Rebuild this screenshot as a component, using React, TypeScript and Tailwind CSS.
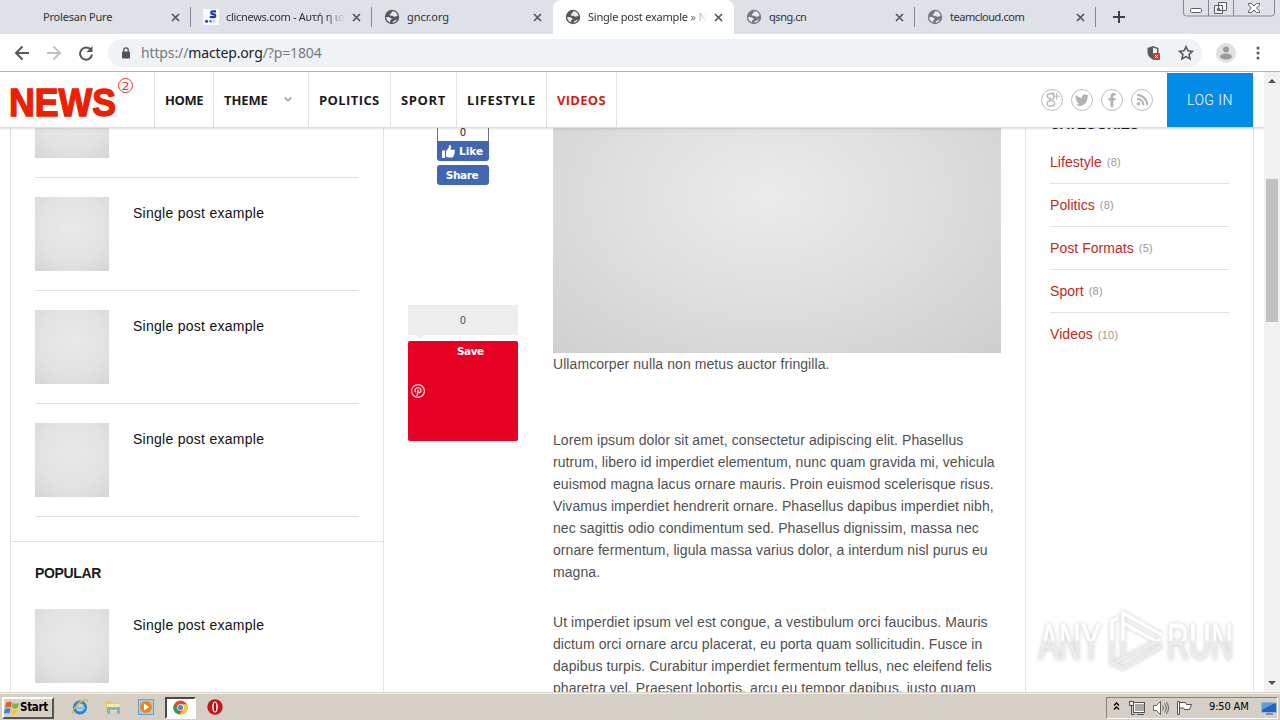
import { ReactNode } from "react";
import clsx from "clsx";

type Tab = {
  title: string;
  icon: "none" | "clic" | "globe";
  active?: boolean;
  separator?: boolean;
  fade?: boolean;
  dim?: boolean;
  spacing: string;
};

const tabs: Tab[] = [
  { title: "Prolesan Pure", icon: "none", separator: true, spacing: "tracking-[-0.2px]" },
  { title: "clicnews.com - Αυτή η ιστ", icon: "clic", separator: true, fade: true, spacing: "tracking-[-0.3px]" },
  { title: "gncr.org", icon: "globe", spacing: "tracking-[-0.05px]" },
  { title: "Single post example » Ne", icon: "globe", active: true, fade: true, spacing: "tracking-[-0.22px]" },
  { title: "qsng.cn", icon: "globe", separator: true, dim: true, spacing: "tracking-[-0.45px]" },
  { title: "teamcloud.com", icon: "globe", separator: true, dim: true, spacing: "tracking-[-0.45px]" },
];

const categories = [
  { name: "Lifestyle", count: 8 },
  { name: "Politics", count: 8 },
  { name: "Post Formats", count: 5 },
  { name: "Sport", count: 8 },
  { name: "Videos", count: 10 },
];

const navItems = [
  { label: "HOME", width: "w-[59px] tracking-[-0.4px]" },
  { label: "THEME", width: "w-[95px] tracking-[-0.1px]", menu: true },
  { label: "POLITICS", width: "w-[82px] tracking-[0.4px]" },
  { label: "SPORT", width: "w-[66px] tracking-[0.6px]" },
  { label: "LIFESTYLE", width: "w-[90px] tracking-[0.6px]" },
  { label: "VIDEOS", width: "w-[71px] border-r tracking-[0.3px]", current: true },
];

const firstParagraph = [
  "Lorem ipsum dolor sit amet, consectetur adipiscing elit. Phasellus",
  "rutrum, libero id imperdiet elementum, nunc quam gravida mi, vehicula",
  "euismod magna lacus ornare mauris. Proin euismod scelerisque risus.",
  "Vivamus imperdiet hendrerit ornare. Phasellus dapibus imperdiet nibh,",
  "nec sagittis odio condimentum sed. Phasellus dignissim, massa nec",
  "ornare fermentum, ligula massa varius dolor, a interdum nisl purus eu",
  "magna.",
];

const secondParagraph = [
  "Ut imperdiet ipsum vel est congue, a vestibulum orci faucibus. Mauris",
  "dictum orci ornare arcu placerat, eu porta quam sollicitudin. Fusce in",
  "dapibus turpis. Curabitur imperdiet fermentum tellus, nec eleifend felis",
  "pharetra vel. Praesent lobortis, arcu eu tempor dapibus, justo quam",
];

function Globe({ dim }: { dim?: boolean }) {
  return (
    <svg className="h-4 w-4" viewBox="0 0 16 16">
      <circle cx="8" cy="8" r="7.2" fill={dim ? "#75787c" : "#54575b"} />
      <path
        d="M8.500 2.300c-1.300.600-.4 1.500-1.500 2.100-1.300.5-1.600 1.600-.7 2.100 1 .5 2-.1 2.600.6.600.8 1.800.8 2.500.4l2.200-.6C13.200 4.300 11.200 2.300 8.500 2.300ZM2.200 8c1.300-.1 2.500 0 3.600.5 1 .5 2 .8 1.800 1.800-.3.800-1.500.8-1.600 1.600-.1.500.400 1 .2 1.500C3.700 12.600 2.100 10.400 2.200 8ZM8.500 13.700c.3-.8.3-1.200 1.200-1.600.9-.3 1.200-1 2-1.300.4-.2.800-.1 1.200 0-.8 1.600-2.300 2.800-4.400 2.900Z"
        fill="#e8eaed"
      />
    </svg>
  );
}

function ClicIcon() {
  return (
    <svg className="h-4 w-4" viewBox="0 0 16 16">
      <rect width="16" height="16" fill="#f7fafc" />
      <path d="M13 2.400H9.500c-1.700 0-1.700 2.500 0 2.700l1.500.2c1.800.3 1.700 2.900 0 2.900H6.800" fill="none" stroke="#1f3fa6" strokeWidth="2.200" />
      <circle cx="3.500" cy="12.300" r="1.500" fill="#1f3fa6" />
      <circle cx="7.500" cy="12.300" r="1.200" fill="#4d62b5" />
      <circle cx="11" cy="12.300" r="1" fill="#a9bbe2" />
    </svg>
  );
}

function CloseMark() {
  return (
    <svg className="h-[9px] w-[9px] shrink-0" viewBox="0 0 9 9">
      <path d="M1 1l7 7M8 1 1 8" stroke="#54575c" strokeWidth="1.700" />
    </svg>
  );
}

function TabStrip() {
  return (
    <div className="flex h-[34px] bg-[#dee1e7] pl-[10px]">
      {tabs.map((tab) => (
        <div
          key={tab.title}
          className={clsx(
            "flex w-[181px] items-center pl-3",
            tab.active && "rounded-t-lg bg-white"
          )}
        >
          <div className="h-4 w-4 shrink-0">
            {tab.icon === "clic" && <ClicIcon />}
            {tab.icon === "globe" && <Globe dim={tab.dim} />}
          </div>
          <div
            className={clsx(
              "w-[119px] overflow-hidden whitespace-nowrap font-['Noto_Sans',sans-serif] text-[11px] text-[#303236]",
              tab.icon === "none" ? "ml-[5px] mr-[2px]" : "ml-[7px]",
              tab.fade && "[mask-image:linear-gradient(to_right,black_84%,transparent)]",
              tab.spacing
            )}
          >
            {tab.title}
          </div>
          <div className="ml-[7px] flex flex-1 items-center justify-between">
            <CloseMark />
            {tab.separator && <span className="h-[20px] w-px bg-[#85888e]" />}
          </div>
        </div>
      ))}
      <svg className="ml-[17px] mt-[11px] h-3 w-3" viewBox="0 0 12 12">
        <path d="M6 0v12M0 6h12" stroke="#3c3f43" strokeWidth="2" />
      </svg>
      <svg className="ml-[57px] h-[18px] w-[94px]" viewBox="0 0 94 18" fill="none" stroke="#85888d">
        <path d="M1.500 0v13q0 3 3 3h85q3 0 3-3V0M26.500 0v16M51.500 0v16" />
        <rect x="8.500" y="8.500" width="11" height="4" rx="1" stroke="#5d6065" fill="#fff" />
        <path d="M36.500 2.500h8v8h-8zM32.500 5.500h8v8h-8zM35.500 8.500h2v2h-2z" stroke="#5d6065" fill="#f4f5f7" />
        <path d="M66.500 3.500h3l2.500 2.500 2.500-2.500h3v1.500l-3 3 3 3v1.500h-3l-2.500-2.500-2.500 2.500h-3v-1.500l3-3-3-3z" stroke="#5d6065" fill="#fff" />
      </svg>
    </div>
  );
}

function Toolbar() {
  return (
    <div className="flex h-[38px] items-center border-b border-[#b1b3ae] bg-white">
      <svg className="ml-[14px] h-4 w-[84px]" viewBox="0 0 84 16" fill="none" strokeWidth="2">
        <path d="M15 8H2M8.500 1.500 2 8l6.500 6.500" stroke="#54575b" />
        <path d="M33 8h13M39.500 1.500 46 8l-6.500 6.500" stroke="#bfc1c4" />
        <path d="M77 5.200A6 6 0 1 0 78 9.500" stroke="#54575b" />
        <path d="M78.500 1v6h-6z" fill="#54575b" />
      </svg>
      <div className="ml-[10px] flex h-7 w-[1094px] items-center rounded-full bg-[#f0f3f6] pl-[13px] pr-[8px]">
        <svg className="h-3 w-[10px]" viewBox="0 0 10 12">
          <rect x="1" y="4.500" width="8" height="7" rx="1" fill="#4f5256" />
          <path d="M2.800 5V3a2.200 2.200 0 0 1 4.400 0v2" fill="none" stroke="#4f5256" strokeWidth="1.300" />
        </svg>
        <span className="ml-[10px] whitespace-nowrap font-['Noto_Sans',sans-serif] text-[14px] leading-5 tracking-[-0.13px] text-[#75797e]">
          https://<span className="text-[#202124]">mactep.org</span>/?p=1804
        </span>
        <svg className="ml-auto h-4 w-4" viewBox="0 0 16 16">
          <path d="M7 1 1.500 3v4c0 3.500 2.300 6 5.500 7.500C10.200 13 12.500 10.500 12.500 7V3z" fill="#555a60" />
          <path d="M7 2.500V13c2.500-1.200 4-3.200 4-6V4z" fill="#eef0f2" />
          <rect x="7" y="8" width="7" height="7" rx="1" fill="#d8372c" />
          <path d="m9 10 3 3m0-3-3 3" stroke="#fff" />
        </svg>
        <svg className="ml-4 h-4 w-4" viewBox="0 0 24 24" fill="none" stroke="#54575b" strokeWidth="2.300">
          <path d="m12 2.500 2.900 6.300 6.900.7-5.200 4.600 1.500 6.900L12 17.400 5.900 21l1.500-6.900L2.200 9.500l6.900-.7z" />
        </svg>
      </div>
      <svg className="ml-[14px] h-5 w-5" viewBox="0 0 20 20">
        <circle cx="10" cy="10" r="10" fill="#e0e0e0" />
        <circle cx="10" cy="6.500" r="3" fill="#9a9a9a" />
        <ellipse cx="10" cy="13.500" rx="6" ry="3" fill="#9a9a9a" />
      </svg>
      <svg className="ml-[20px] h-[14px] w-1" viewBox="0 0 4 14" fill="#54575b">
        <circle cx="2" cy="2" r="1.500" />
        <circle cx="2" cy="7" r="1.500" />
        <circle cx="2" cy="12" r="1.500" />
      </svg>
    </div>
  );
}

function SocialIcon({ children }: { children: ReactNode }) {
  return (
    <svg className="h-[22px] w-[22px]" viewBox="0 0 22 22">
      <circle cx="11" cy="11" r="10.500" fill="#fff" stroke="#bdbdbd" />
      {children}
    </svg>
  );
}

function SiteHeader() {
  return (
    <header className="z-10 flex h-[56px] shrink-0 border-b border-[#dcdcdc] bg-white shadow-[0_1px_2px_rgba(0,0,0,0.12)]">
      <svg className="h-[55px] w-[154px]" viewBox="0 0 154 55">
        <text
          x="9"
          y="43.500"
          textLength="107"
          lengthAdjust="spacingAndGlyphs"
          strokeWidth="1.400"
          className="fill-[#ea2000] stroke-[#ea2000] font-['Liberation_Sans',sans-serif] text-[39px] font-bold"
        >
          NEWS
        </text>
        <circle cx="125.500" cy="13.500" r="7" fill="none" stroke="#dc3b2c" />
        <text
          x="121.500"
          y="17.500"
          textLength="8"
          lengthAdjust="spacingAndGlyphs"
          className="fill-[#dc3b2c] font-['DejaVu_Sans',sans-serif] text-[10px]"
        >
          2
        </text>
      </svg>
      <nav className="flex">
        {navItems.map((item) => (
          <div
            key={item.label}
            className={clsx(
              "flex items-center border-l border-[#e2e2e2] pl-[10px] pt-[2px] font-['Open_Sans',sans-serif] text-[13px] leading-none font-bold whitespace-nowrap",
              item.width,
              item.current ? "text-[#cf1f14]" : "text-[#1b1b1b]"
            )}
          >
            {item.label}
            {item.menu && (
              <svg className="ml-auto mb-1 mr-[15px] h-2 w-[10px]" viewBox="0 0 10 8">
                <path d="m1.500 2.500 3.500 3 3.500-3" fill="none" stroke="#b0b0b0" strokeWidth="1.800" />
              </svg>
            )}
          </div>
        ))}
      </nav>
      <div className="ml-auto mr-[14px] flex items-center gap-2">
        <SocialIcon>
          <path
            d="M13.500 4.500H10C5 4.500 5.300 9.700 9.300 9.500c-.5 1 .2 1.500.9 1.900C4.800 11.800 5 17.300 9.500 17.300c4.800 0 5.200-3.500 2.700-5.200-1.400-1-.6-1.600.2-2.400 1.400-1.500.8-3.700-1-5"
            fill="none"
            stroke="#b9b9b9"
            strokeWidth="1.500"
          />
          <path d="M15.500 4v6.500M12.500 7.200h6.500" stroke="#b9b9b9" />
        </SocialIcon>
        <SocialIcon>
          <path
            d="M18 6.500c-.6.300-1 .4-1.600.5.600-.4 1-.9 1.200-1.500-.6.300-1.200.6-1.800.7A2.900 2.900 0 0 0 10.900 9 8 8 0 0 1 5 6c-.8 1.300-.4 3 .9 3.900-.5 0-.9-.1-1.300-.4 0 1.400 1 2.600 2.300 2.900-.4.100-.9.100-1.300 0 .4 1.200 1.400 2 2.700 2A6 6 0 0 1 4 15.600c5.600 3.400 12.600-.2 12.500-7.600.6-.4 1.100-.9 1.500-1.500Z"
            fill="#b3b3b3"
          />
        </SocialIcon>
        <SocialIcon>
          <path d="M9.500 18v-6.500H7.300V9h2.200V7.200C9.500 5 10.800 4 12.600 4h2v2.400h-1.300c-.9 0-1.100.4-1.100 1.100V9h2.400l-.3 2.500h-2.100V18z" fill="#b3b3b3" />
        </SocialIcon>
        <SocialIcon>
          <circle cx="7.500" cy="14.800" r="1.700" fill="#b3b3b3" />
          <path d="M6 9.700a6.500 6.500 0 0 1 6.500 6.600M6 5.900a10.300 10.300 0 0 1 10.300 10.400" fill="none" stroke="#b3b3b3" strokeWidth="2" />
        </SocialIcon>
      </div>
      <div className="mr-[11px] mt-px flex w-[86px] items-center justify-center bg-[#038be8] font-['Roboto',sans-serif] text-[14px] font-light tracking-[0.5px] text-white">
        LOG IN
      </div>
    </header>
  );
}

function Thumb() {
  return (
    <div className="h-[74px] w-[74px] shrink-0 bg-[radial-gradient(circle_at_50%_42%,#e9e9e9,#e2e2e2_60%,#d5d5d5)]" />
  );
}

function PostItem({ title = "Single post example" }: { title?: string }) {
  return (
    <div className="flex h-[113px] gap-6 border-b border-[#dfdfdf] pt-[19px]">
      <Thumb />
      <span className="mt-[6px] text-[14px] leading-5 tracking-[0.27px] text-[#111]">{title}</span>
    </div>
  );
}

function LeftColumn() {
  return (
    <aside className="ml-[10px] w-[374px] shrink-0 border-x border-[#e2e2e2]">
      <section className="-mt-[63px] h-[477px] border-b border-[#e2e2e2] pl-6 pr-[24px]">
        <PostItem />
        <PostItem />
        <PostItem />
        <PostItem />
      </section>
      <section className="pl-6 pr-[24px]">
        <h3 className="pt-[21px] text-[14px] font-bold leading-5 tracking-[-0.35px] text-[#1b1b1b]">POPULAR</h3>
        <div className="mt-[7px]">
          <PostItem />
        </div>
      </section>
    </aside>
  );
}

function ShareColumn() {
  return (
    <div className="ml-6 flex w-[110px] shrink-0 flex-col items-center font-['DejaVu_Sans',sans-serif]">
      <div className="flex h-[14px] w-[52px] items-center justify-center border-x border-[#6e7175] text-[10px] leading-none text-[#1d2129]">
        <span className="-mt-[5px]">0</span>
      </div>
      <div className="-mt-px flex h-5 w-[52px] items-center rounded-b-[3px] bg-[#4167b2] pl-[5px] text-[10.500px] font-bold text-white">
        <svg className="mr-1 h-[13px] w-[13px] shrink-0" viewBox="0 0 13 13" fill="#fff">
          <path d="M0 5.500h3V13H0zM4 6l2.700-3.300L7 .4c1.700-.6 2.500.8 2 2.400l-.6 1.900h3.300c1.500 0 1.500 1.600.8 2.100.5.800.2 1.700-.4 2 .3.800 0 1.500-.6 1.800.2 1-.4 1.800-1.300 1.800H6.500L4 11.800z" />
        </svg>
        <span className="pt-px">Like</span>
      </div>
      <div className="mt-1 flex h-5 w-[52px] items-center justify-center rounded-[3px] bg-[#4167b2] pr-[2px] pt-[2px] text-[10.500px] font-bold tracking-[-0.4px] text-white">
        Share
      </div>
      <div className="mt-[120px] flex h-[30px] w-[110px] items-center justify-center bg-[#eeeeee] text-[10px] text-[#555]">
        0
      </div>
      <span className="-ml-[86px] border-x-[5px] border-t-[4px] border-x-transparent border-t-[#eeeeee]" />
      <div className="mt-[2px] flex h-[100px] w-[110px] flex-col rounded-[2px] bg-[#e60023] pt-[3px] text-[10.500px] font-bold leading-[14px] tracking-[-0.5px] text-white">
        <span className="pl-[49px]">Save</span>
        <svg className="ml-[3px] mt-[26px] h-[14px] w-[14px]" viewBox="0 0 14 14" fill="none" stroke="#ffd5dc">
          <circle cx="7" cy="7" r="6.400" strokeWidth="1.200" />
          <path d="M4.800 8.200C2.900 5.800 4.800 3.600 7 3.600c2.500 0 3.500 2 2.700 3.800-.7 1.700-2.500 1.500-2.900.6M7.300 5.500 6 12" strokeWidth="1.400" />
        </svg>
      </div>
    </div>
  );
}

function Lines({ lines }: { lines: string[] }) {
  return (
    <p className="mb-[28px]">
      {lines.map((line) => (
        <span key={line} className="block">
          {line}
        </span>
      ))}
    </p>
  );
}

function Article() {
  return (
    <article className="ml-[35px] w-[448px] shrink-0 whitespace-nowrap text-[14px] leading-[22px] tracking-[0.075px] text-[#505050]">
      <div className="h-[225px] bg-[radial-gradient(ellipse_at_48%_30%,#ebebeb,#dfdfdf_45%,#cecece)]" />
      <p className="mb-[54px]">Ullamcorper nulla non metus auctor fringilla.</p>
      <Lines lines={firstParagraph} />
      <Lines lines={secondParagraph} />
    </article>
  );
}

function Categories() {
  return (
    <aside className="ml-6 w-[229px] shrink-0 border-x border-[#e2e2e2] px-6">
      <h3 className="-mt-[14px] text-[14px] font-bold leading-5 tracking-[-0.3px] text-[#1b1b1b]">CATEGORIES</h3>
      <ul className="mt-[7px]">
        {categories.map((c) => (
          <li key={c.name} className="flex h-[43px] items-center gap-[5px] border-b border-[#e2e2e2] last:border-0">
            <span className="text-[14px] tracking-[0.05px] text-[#c02a1e]">{c.name}</span>
            <span className="pt-px text-[11px] tracking-[0.2px] text-[#999]">({c.count})</span>
          </li>
        ))}
      </ul>
    </aside>
  );
}

function Scrollbar() {
  return (
    <div className="flex w-4 flex-col items-center bg-[#f1f1f1]">
      <span className="mt-[7px] border-x-4 border-b-4 border-x-transparent border-b-[#505050]" />
      <span className="mt-[96px] h-[143px] w-3 bg-[#c1c1c1]" />
      <span className="mb-[7px] mt-auto border-x-4 border-t-4 border-x-transparent border-t-[#505050]" />
    </div>
  );
}

function Watermark() {
  return (
    <svg
      className="absolute left-[1030px] top-[602px] z-20 h-[76px] w-[214px] drop-shadow-[0_0_2px_rgba(0,0,0,0.22)]"
      viewBox="0 0 214 76"
    >
      <defs>
        <linearGradient id="fade" gradientUnits="userSpaceOnUse" x1="0" y1="0" x2="0" y2="76">
          <stop offset="0.500" stopColor="#ffffff" />
          <stop offset="0.520" stopColor="#ebebeb" />
        </linearGradient>
      </defs>
      <g className="font-['Liberation_Sans',sans-serif] text-[50px]" fill="url(#fade)" stroke="url(#fade)" strokeWidth="0.800">
        <text x="9" y="57" textLength="62" lengthAdjust="spacingAndGlyphs">
          ANY
        </text>
        <text x="137" y="57" textLength="66" lengthAdjust="spacingAndGlyphs">
          RUN
        </text>
      </g>
      <g fill="none" stroke="url(#fade)" strokeWidth="3.500">
        <path d="M93 55V11l39 22M88 16l-6 3v43l48-24M93 21l36 20M132 44 93 66l-10-5" />
      </g>
    </svg>
  );
}

function Taskbar() {
  return (
    <div className="flex h-[28px] items-center border-t border-[#d6cfc6] bg-[#d6cfc6] font-['DejaVu_Sans_Condensed','DejaVu_Sans',sans-serif] shadow-[inset_0_1px_0_#f6f3ef]">
      <div className="ml-[2px] mt-[2px] flex h-[22px] w-[52px] items-center border-2 border-b-[#57534e] border-l-white border-r-[#57534e] border-t-white text-[11.500px] font-bold tracking-[-0.3px] text-black">
        <svg className="h-4 w-4 shrink-0" viewBox="0 0 16 16">
          <path d="M2 3q3-2 6-.500L6.800 7.500Q4 6.500 1 8z" fill="#e85b2a" />
          <path d="M8.800 3Q12 4.500 15 3l-1.300 5Q11 9 7.800 7.800z" fill="#6fbb3e" />
          <path d="M.8 9q3-1.500 5.800-.300L5.300 13.500Q3 12.300 0 13.600z" fill="#3785d0" />
          <path d="M7.500 9q3 1.500 6 .200L12.200 14Q9 15 6.300 13.800z" fill="#f8c633" />
        </svg>
        <span>Start</span>
      </div>
      <svg className="ml-[17px] h-[18px] w-[18px]" viewBox="0 0 18 18" fill="none">
        <circle cx="9" cy="9.500" r="5.500" stroke="#2584d6" strokeWidth="3" />
        <path d="M5 10h9" stroke="#72c5f4" strokeWidth="2.500" />
        <path d="M2 16C.5 14 5 6 12 2.500c3-1.500 5-1 4 1.500" stroke="#dfb740" strokeWidth="1.500" />
      </svg>
      <svg className="ml-[15px] h-[18px] w-[18px]" viewBox="0 0 18 18">
        <path d="M2 3h6l1 2h6v8H2z" fill="#e7c863" />
        <path d="M3 6h13v7H3z" fill="#f7e9a6" />
        <path d="M3 9h13v7h-3v-4H6v4H3z" fill="#70b8dc" />
      </svg>
      <svg className="ml-[15px] h-[18px] w-[18px]" viewBox="0 0 18 18">
        <rect x="1.500" y="1.500" width="15" height="15" fill="#a9cbe6" stroke="#6d9fc9" />
        <circle cx="9" cy="9" r="6" fill="#f08519" />
        <path d="m7 5.500 5 3.500-5 3.500z" fill="#fff" />
      </svg>
      <div className="ml-[10px] mt-[2px] flex h-[22px] w-[31px] items-center justify-center border-2 border-b-white border-l-[#4b4844] border-r-white border-t-[#4b4844] bg-white">
        <svg className="h-[15px] w-[15px]" viewBox="0 0 16 16">
          <circle cx="8" cy="8" r="7.500" fill="#de4b3e" />
          <path d="M1.300 4.500 5.500 11l1.500 4.500A7.500 7.500 0 0 1 1.300 4.500Z" fill="#2f9e54" />
          <path d="M8 4.500h6.700A7.500 7.500 0 0 1 7 15.500L11 10z" fill="#f8ca3a" />
          <circle cx="8" cy="8" r="3.500" fill="#fff" />
          <circle cx="8" cy="8" r="2.700" fill="#4285d8" />
        </svg>
      </div>
      <svg className="ml-[11px] h-4 w-4" viewBox="0 0 16 16">
        <circle cx="8" cy="8" r="7.700" fill="#c3161c" />
        <ellipse cx="8" cy="8" rx="2.800" ry="5.500" fill="#fff" />
        <ellipse cx="8" cy="8" rx="1.300" ry="4.500" fill="#a11117" />
      </svg>
      <div className="ml-auto mr-[2px] mt-[2px] flex h-[22px] w-[172px] items-center border border-b-white border-l-[#85817b] border-r-white border-t-[#85817b] pl-[6px] text-[11px] text-black">
        <svg className="-mt-[3px] h-2 w-[7px]" viewBox="0 0 7 8" fill="none" stroke="#000" strokeWidth="1.300">
          <path d="m1 3.500 2.500-2.500L6 3.500M1 7.500 3.500 5 6 7.500" />
        </svg>
        <svg className="ml-[9px] h-4 w-4" viewBox="0 0 16 16">
          <rect x="5.500" y="3.500" width="10" height="8" fill="#aaa" stroke="#fff" />
          <rect x="4.500" y="2.500" width="11" height="10" fill="none" stroke="#55524e" />
          <path d="M8 14.500h7M2.500 5v9.500H6" stroke="#55524e" fill="none" />
          <rect x=".5" y="1.500" width="4" height="4" fill="#f2f0ed" stroke="#55524e" />
        </svg>
        <svg className="ml-[7px] h-4 w-[17px]" viewBox="0 0 17 16" fill="none" stroke="#66625d">
          <path d="M1.500 5.500h3l4-4v13l-4-4h-3z" fill="#fff" />
          <path d="M10.500 5.500q2 2.500 0 5M12.500 3.500q3.500 4.500 0 9M14.500 2q4 6 0 12" />
        </svg>
        <svg className="ml-[7px] h-4 w-4" viewBox="0 0 16 16" stroke="#55524e" fill="#fff">
          <path d="M1.500 1.500h2v13h-2zM3.500 2.500h6l1 2h5l-2 5h-5l-1-1.500h-4z" />
        </svg>
        <span className="ml-[17px] whitespace-nowrap tracking-[-0.15px]">9:50 AM</span>
        <svg className="ml-auto mr-0 h-4 w-4" viewBox="0 0 16 16">
          <path d="M.5 2.500 15.500 3v9.500H.5z" fill="#2463bd" stroke="#98b4d8" />
          <path d="M1 3h13L1 10z" fill="#5b9ae4" />
          <path d="M5 14h7" stroke="#4b4844" />
        </svg>
      </div>
    </div>
  );
}

export default function App() {
  return (
    <div className="relative flex h-[720px] w-[1280px] flex-col overflow-hidden bg-white font-['Liberation_Sans',sans-serif]">
      <TabStrip />
      <Toolbar />
      <div className="flex h-[620px]">
        <div className="flex w-[1264px] flex-col overflow-hidden">
          <SiteHeader />
          <main className="flex h-[564px] overflow-hidden">
            <LeftColumn />
            <ShareColumn />
            <Article />
            <Categories />
          </main>
        </div>
        <Scrollbar />
      </div>
      <Taskbar />
      <Watermark />
    </div>
  );
}
